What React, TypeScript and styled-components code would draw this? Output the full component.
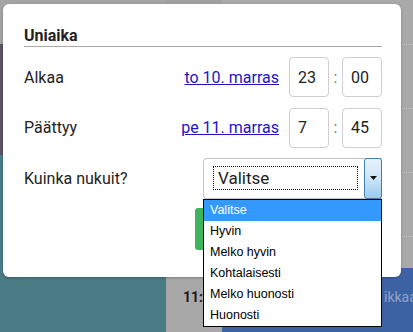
import styled, { createGlobalStyle } from 'styled-components';

const GlobalStyle = createGlobalStyle`
  html, body {
    margin: 0;
    padding: 0;
    background: #a7a7a7;
  }

  body {
    font-family: Roboto, 'Liberation Sans', sans-serif;
  }
`;

const OPTIONS = ['Valitse', 'Hyvin', 'Melko hyvin', 'Kohtalaisesti', 'Melko huonosti', 'Huonosti'];

const App = () => {
  return (
    <>
      <GlobalStyle />
      <StyledPage>
        <StyledDayColumn>
          <StyledDayBlock height={44} color="#a4a4a4" />
          <StyledDayBlock height={111} color="#5c5363" />
          <StyledDayBlock color="#4a7c86" />
        </StyledDayColumn>
        <StyledTimeColumn>
          <StyledTimeLabel>11:00</StyledTimeLabel>
        </StyledTimeColumn>
        <StyledHourColumn>
          <StyledHourSlot height={44} />
          <StyledHourSlot height={64} dotted />
          <StyledHourSlot height={64} dotted />
          <StyledHourSlot height={64} dotted />
          <StyledHourSlot height={32} dotted />
          <StyledEvent>
            <span>ikkaan</span>
          </StyledEvent>
        </StyledHourColumn>

        <StyledModal>
          <StyledTitle>Uniaika</StyledTitle>

          <StyledRow>
            <StyledLabel>Alkaa</StyledLabel>
            <StyledDateLink href="#">to 10. marras</StyledDateLink>
            <StyledTimeInput defaultValue="23" />
            <StyledColon>:</StyledColon>
            <StyledTimeInput defaultValue="00" />
          </StyledRow>

          <StyledRow>
            <StyledLabel>Päättyy</StyledLabel>
            <StyledDateLink href="#">pe 11. marras</StyledDateLink>
            <StyledTimeInput defaultValue="7" />
            <StyledColon>:</StyledColon>
            <StyledTimeInput defaultValue="45" />
          </StyledRow>

          <StyledRow>
            <StyledLabel>Kuinka nukuit?</StyledLabel>
            <StyledSelectWrapper>
              <StyledSelectBox>
                <StyledSelectValue>Valitse</StyledSelectValue>
                <StyledArrowButton>
                  <svg width="7" height="4" viewBox="0 0 7 4">
                    <path d="M0 0h7L3.5 4z" fill="#111" />
                  </svg>
                </StyledArrowButton>
              </StyledSelectBox>
              <StyledListbox>
                {OPTIONS.map((option, i) => (
                  <StyledOption key={option} selected={i === 0}>
                    {option}
                  </StyledOption>
                ))}
              </StyledListbox>
            </StyledSelectWrapper>
          </StyledRow>

          <StyledFooter>
            {/* label is hidden behind the open list */}
            <StyledSaveButton type="button" aria-label="Tallenna" />
          </StyledFooter>
        </StyledModal>
      </StyledPage>
    </>
  );
};

export default App;

const StyledPage = styled.div`
  position: relative;
  display: flex;

  width: 413px;
  height: 332px;
  overflow: hidden;

  background: #a7a7a7;
`;

const StyledDayColumn = styled.div`
  display: flex;
  flex-direction: column;
  flex: 0 0 166px;
`;

const StyledDayBlock = styled.div<{ height?: number; color: string }>`
  flex: ${({ height }) => (height ? `0 0 ${height}px` : '1')};

  background: ${({ color }) => color};
`;

const StyledTimeColumn = styled.div`
  flex: 0 0 56px;
  padding-top: 283px;
  box-sizing: border-box;

  background: #a8a8a8;
  border-top: 4px solid #a0a0a0;
`;

const StyledTimeLabel = styled.span`
  display: block;
  padding-left: 17px;

  color: #1c1c1c;
  font-size: 14px;
  font-weight: bold;
  line-height: 20px;
`;

const StyledHourColumn = styled.div`
  display: flex;
  flex-direction: column;
  flex: 1;
  min-width: 0;

  background: #a9a9a9;
`;

const StyledHourSlot = styled.div<{ height: number; dotted?: boolean }>`
  flex: 0 0 ${({ height }) => height}px;
  box-sizing: border-box;

  border-top: ${({ dotted }) => (dotted ? '1px dotted #c4c4c4' : 'none')};
`;

const StyledEvent = styled.div`
  flex: 1;
  padding: 21px 0 0 162px;
  overflow: hidden;

  background: #3d62a4;
  border-radius: 6px 0 0 0;

  color: #8ea3c9;
  font-size: 14px;
  white-space: nowrap;
`;

const StyledModal = styled.div`
  position: absolute;
  top: 4px;
  left: 3px;

  width: 398px;
  height: 273px;
  padding: 22px 19px 0 21px;
  box-sizing: border-box;

  background: #fff;
  border-radius: 6px;
  box-shadow: 0 1px 3px rgba(0, 0, 0, 0.25);

  color: #222;
`;

const StyledTitle = styled.div`
  margin-bottom: 10px;

  border-bottom: 1px solid #a8a8a8;

  font-size: 16px;
  font-weight: bold;
  line-height: 20px;
`;

const StyledRow = styled.div`
  display: flex;
  align-items: center;

  height: 40px;
  margin-bottom: 10px;

  &:nth-of-type(3) {
    height: 41px;
  }
`;

const StyledLabel = styled.span`
  flex: 1;

  font-size: 16px;
`;

const StyledDateLink = styled.a`
  margin-right: 10px;

  color: #1d14c6;
  font-size: 16px;
  text-decoration: underline;
`;

const StyledTimeInput = styled.input`
  width: 40px;
  height: 40px;
  padding: 0 8px;
  box-sizing: border-box;

  border: 1px solid #cfcfcf;
  border-radius: 4px;
  outline: none;

  color: #222;
  font-family: Roboto, sans-serif;
  font-size: 16px;
`;

const StyledColon = styled.span`
  width: 13px;

  color: #777;
  font-size: 16px;
  text-align: center;
`;

const StyledSelectWrapper = styled.div`
  position: relative;

  width: 179px;
  height: 41px;
`;

const StyledSelectBox = styled.div`
  display: flex;
  align-items: center;
  justify-content: space-between;

  height: 100%;
  padding-left: 9px;
  box-sizing: border-box;

  border: 1px solid #c4c4c4;
  border-right: none;
  border-radius: 4px 0 0 4px;
`;

const StyledSelectValue = styled.span`
  width: 145px;
  height: 24px;
  padding-left: 4px;
  box-sizing: border-box;

  border: 1px dotted #111;

  color: #222;
  font-size: 17px;
  line-height: 22px;
`;

const StyledArrowButton = styled.span`
  display: flex;
  align-items: center;
  justify-content: center;
  align-self: stretch;

  width: 18px;
  margin: -1px 0;
  box-sizing: border-box;

  background: linear-gradient(#e6f3fc, #cfe7f8 45%, #9ccbee);
  border: 1px solid #3f7eaf;
  border-radius: 3px;
`;

const StyledListbox = styled.ul`
  position: absolute;
  top: 100%;
  left: 0;
  right: 0;
  z-index: 2;

  margin: 0;
  padding: 0;

  background: #fff;
  border: 1px solid #000;

  list-style: none;
`;

const StyledOption = styled.li<{ selected: boolean }>`
  height: 21px;
  padding-left: 6px;

  background: ${({ selected }) => (selected ? '#3399ff' : '#fff')};

  color: ${({ selected }) => (selected ? '#fff' : '#000')};
  font-family: 'Liberation Sans', Arial, sans-serif;
  font-size: 12.5px;
  line-height: 21px;
`;

const StyledFooter = styled.div`
  display: flex;

  margin-top: 6px;
  padding-left: 171px;
`;

const StyledSaveButton = styled.button`
  width: 110px;
  height: 42px;

  background: #3cb55d;
  border: none;
  border-radius: 3px;
`;
